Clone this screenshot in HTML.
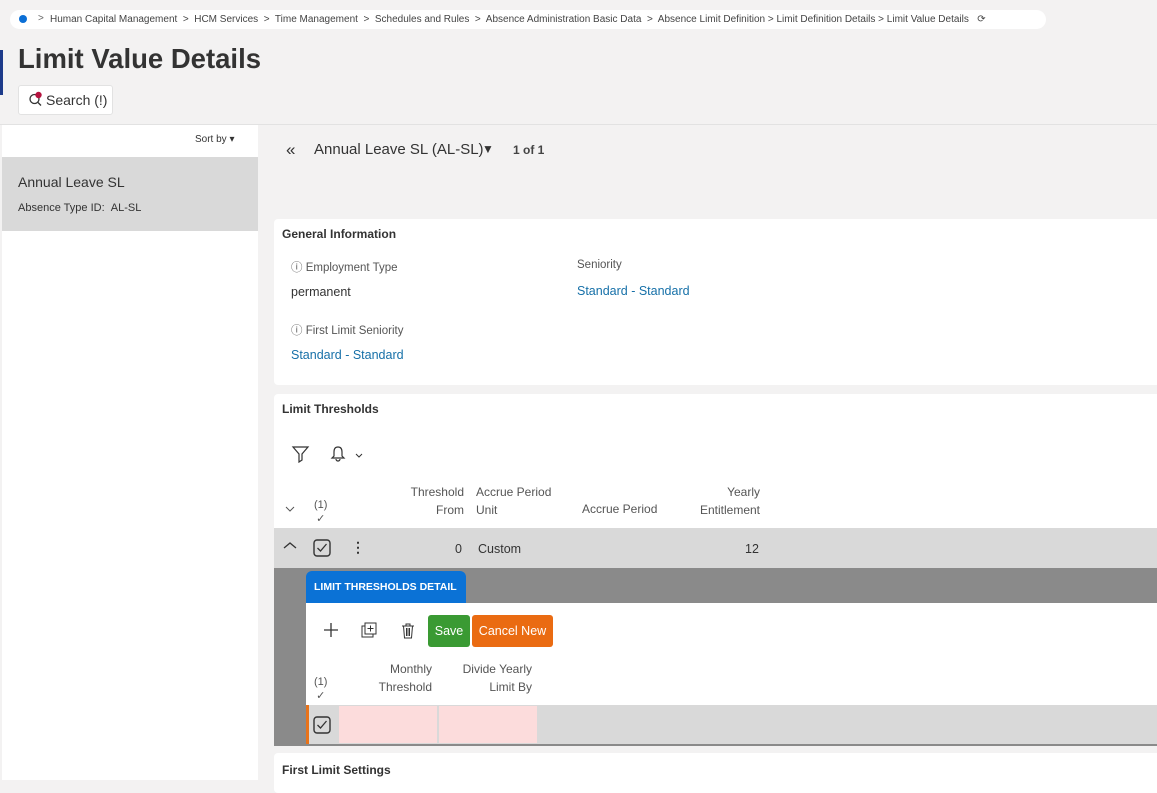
<!DOCTYPE html>
<html><head><meta charset="utf-8"><style>
*{margin:0;padding:0;box-sizing:border-box}
body{width:1157px;height:780px;overflow:hidden;background:#f3f2f2;font-family:"Liberation Sans",sans-serif;color:#333;position:relative}
.a{position:absolute;white-space:nowrap}
.bc{left:10px;top:10px;width:1036px;height:19px;background:#fff;border-radius:10px;font-size:10px;color:#444;padding-left:40px;line-height:19px}
.card{background:#fff;border-radius:4px;position:absolute}
.lbl{font-size:11.5px;color:#555}
.lnk{font-size:12.5px;color:#1670a8}
.cb{width:16px;height:16px;border:1.5px solid #333;border-radius:3px}
</style></head><body>
<div class="a bc">Human Capital Management &nbsp;&gt;&nbsp; HCM Services &nbsp;&gt;&nbsp; Time Management &nbsp;&gt;&nbsp; Schedules and Rules &nbsp;&gt;&nbsp; Absence Administration Basic Data &nbsp;&gt;&nbsp; Absence Limit Definition &gt; Limit Definition Details &gt; Limit Value Details &nbsp; ⟳</div>
<div class="a" style="left:19px;top:15px;width:8px;height:8px;border-radius:50%;background:#0b6fd6"></div>
<div class="a" style="left:38px;top:13px;font-size:10px;color:#666">&gt;</div>
<div class="a" style="left:0;top:50px;width:3px;height:45px;background:#1d3b8a"></div>
<div class="a" style="left:18px;top:43px;font-size:27.5px;font-weight:bold;color:#333">Limit Value Details</div>
<div class="a" style="left:18px;top:85px;width:95px;height:30px;background:#fff;border:1px solid #e2e2e2;border-radius:3px;font-size:14px;line-height:28px;padding-left:27px">Search (!)</div>
<svg class="a" style="left:28px;top:91px" width="16" height="16"><circle cx="6.5" cy="8" r="4.5" fill="none" stroke="#333" stroke-width="1.3"/><line x1="10" y1="11.5" x2="13" y2="14.5" stroke="#333" stroke-width="1.3"/><circle cx="10.5" cy="4" r="3.2" fill="#b5133f"/></svg>
<div class="a" style="left:0;top:124px;width:1157px;height:1px;background:#e2e2e2"></div>
<div class="a" style="left:2px;top:125px;width:256px;height:655px;background:#fff"></div>
<div class="a" style="left:187px;top:131px;width:62px;height:18px;background:#fff;border-radius:9px;font-size:10px;line-height:18px;padding-left:8px">Sort by ▾</div>
<div class="a" style="left:2px;top:157px;width:256px;height:74px;background:#d9d9d9"></div>
<div class="a" style="left:18px;top:174px;font-size:14px">Annual Leave SL</div>
<div class="a" style="left:18px;top:202px;font-size:11px">Absence Type ID: &nbsp;AL-SL</div>
<div class="a" style="left:286px;top:140px;font-size:17px">«</div>
<div class="a" style="left:314px;top:141px;font-size:15px">Annual Leave SL (AL-SL)</div>
<div class="a" style="left:482px;top:142px;font-size:12px">▼</div>
<div class="a" style="left:513px;top:143px;font-size:12px;font-weight:bold;color:#444">1 of 1</div>

<div class="card" style="left:274px;top:219px;width:890px;height:166px"></div>
<div class="a" style="left:282px;top:227px;font-size:12px;font-weight:bold">General Information</div>
<div class="a lbl" style="left:291px;top:259px">ⓘ Employment Type</div>
<div class="a" style="left:291px;top:285px;font-size:12.5px">permanent</div>
<div class="a lbl" style="left:577px;top:259px">Seniority</div>
<div class="a lnk" style="left:577px;top:284px">Standard - Standard</div>
<div class="a lbl" style="left:291px;top:322px">ⓘ First Limit Seniority</div>
<div class="a lnk" style="left:291px;top:348px">Standard - Standard</div>

<div class="card" style="left:274px;top:394px;width:890px;height:352px"></div>
<div class="a" style="left:282px;top:402px;font-size:12px;font-weight:bold">Limit Thresholds</div>
<svg class="a" style="left:291px;top:445px" width="20" height="18"><path d="M2 2h15l-6 7v6l-3 2V9z" fill="none" stroke="#333" stroke-width="1.2"/></svg>
<svg class="a" style="left:329px;top:445px" width="40" height="18"><path d="M9 2c-3 0-4 2-4 5v4l-2 2h12l-2-2V7c0-3-1-5-4-5zM7 14a2 2 0 004 0" fill="none" stroke="#333" stroke-width="1.2"/><path d="M27 9l3 3 3-3" fill="none" stroke="#333"/></svg>
<div class="a" style="left:408px;top:483px;font-size:12px;color:#555;text-align:right;width:56px;line-height:18px;white-space:normal">Threshold From</div>
<div class="a" style="left:476px;top:483px;font-size:12px;color:#555;line-height:18px">Accrue Period<br>Unit</div>
<div class="a" style="left:582px;top:502px;font-size:12px;color:#555">Accrue Period</div>
<div class="a" style="left:690px;top:483px;font-size:12px;color:#555;text-align:right;width:70px;line-height:18px">Yearly<br>Entitlement</div>
<svg class="a" style="left:285px;top:505px" width="12" height="8"><path d="M1 2l4 4 4-4" fill="none" stroke="#555"/></svg>
<div class="a" style="left:314px;top:498px;font-size:11px;color:#555;line-height:14px;text-align:center">(1)<br>✓</div>
<div class="a" style="left:274px;top:528px;width:883px;height:40px;background:#d9d9d9"></div>
<svg class="a" style="left:283px;top:541px" width="14" height="10"><path d="M1 7l6-5 6 5" fill="none" stroke="#333" stroke-width="1.3"/></svg>
<svg class="a" style="left:313px;top:539px" width="18" height="18"><rect x="1" y="1" width="16" height="16" rx="3" fill="none" stroke="#333" stroke-width="1.4"/><path d="M4.5 9l3 3 6-7" fill="none" stroke="#333" stroke-width="1.3"/></svg>
<div class="a" style="left:351px;top:539px;font-size:14px;font-weight:bold">⋮</div>
<div class="a" style="left:455px;top:542px;font-size:12.5px">0</div>
<div class="a" style="left:478px;top:542px;font-size:12.5px">Custom</div>
<div class="a" style="left:745px;top:542px;font-size:12.5px">12</div>
<div class="a" style="left:274px;top:568px;width:883px;height:178px;background:#8a8a8a"></div>
<div class="a" style="left:306px;top:571px;width:160px;height:33px;background:#0b72d6;border-radius:6px 6px 0 0;color:#fff;font-size:10.5px;font-weight:bold;line-height:33px;padding-left:8px">LIMIT THRESHOLDS DETAIL</div>
<div class="a" style="left:306px;top:603px;width:851px;height:141px;background:#fff"></div>
<svg class="a" style="left:323px;top:622px" width="16" height="16"><path d="M8 1v14M1 8h14" stroke="#333" stroke-width="1.3"/></svg>
<svg class="a" style="left:361px;top:622px" width="18" height="18"><rect x="1" y="4" width="11" height="11" fill="none" stroke="#333"/><rect x="4" y="1" width="11" height="11" fill="#fff" stroke="#333"/><path d="M9.5 3.5v6M6.5 6.5h6" stroke="#333"/></svg>
<svg class="a" style="left:400px;top:622px" width="16" height="18"><path d="M2 4h12M6 4V2h4v2M3.5 4l1 12h7l1-12M6.5 6v8M8 6v8M9.5 6v8" fill="none" stroke="#333"/></svg>
<div class="a" style="left:428px;top:615px;width:42px;height:32px;background:#3a9a33;border-radius:3px;color:#fff;font-size:12.5px;line-height:32px;text-align:center">Save</div>
<div class="a" style="left:472px;top:615px;width:81px;height:32px;background:#ea6b12;border-radius:3px;color:#fff;font-size:12.5px;line-height:32px;text-align:center">Cancel New</div>
<div class="a" style="left:360px;top:660px;font-size:12px;color:#555;text-align:right;width:72px;line-height:18px">Monthly<br>Threshold</div>
<div class="a" style="left:452px;top:660px;font-size:12px;color:#555;text-align:right;width:80px;line-height:18px">Divide Yearly<br>Limit By</div>
<div class="a" style="left:314px;top:675px;font-size:11px;color:#555;line-height:14px;text-align:center">(1)<br>✓</div>
<div class="a" style="left:306px;top:705px;width:851px;height:39px;background:#d9d9d9;border-left:3px solid #e8731a"></div>
<svg class="a" style="left:313px;top:716px" width="18" height="18"><rect x="1" y="1" width="16" height="16" rx="3" fill="none" stroke="#333" stroke-width="1.4"/><path d="M4.5 9l3 3 6-7" fill="none" stroke="#333" stroke-width="1.3"/></svg>
<div class="a" style="left:339px;top:706px;width:98px;height:37px;background:#fcdcdc"></div>
<div class="a" style="left:439px;top:706px;width:98px;height:37px;background:#fcdcdc"></div>
<div class="card" style="left:274px;top:753px;width:890px;height:40px"></div>
<div class="a" style="left:282px;top:763px;font-size:12px;font-weight:bold">First Limit Settings</div>
</body></html>
